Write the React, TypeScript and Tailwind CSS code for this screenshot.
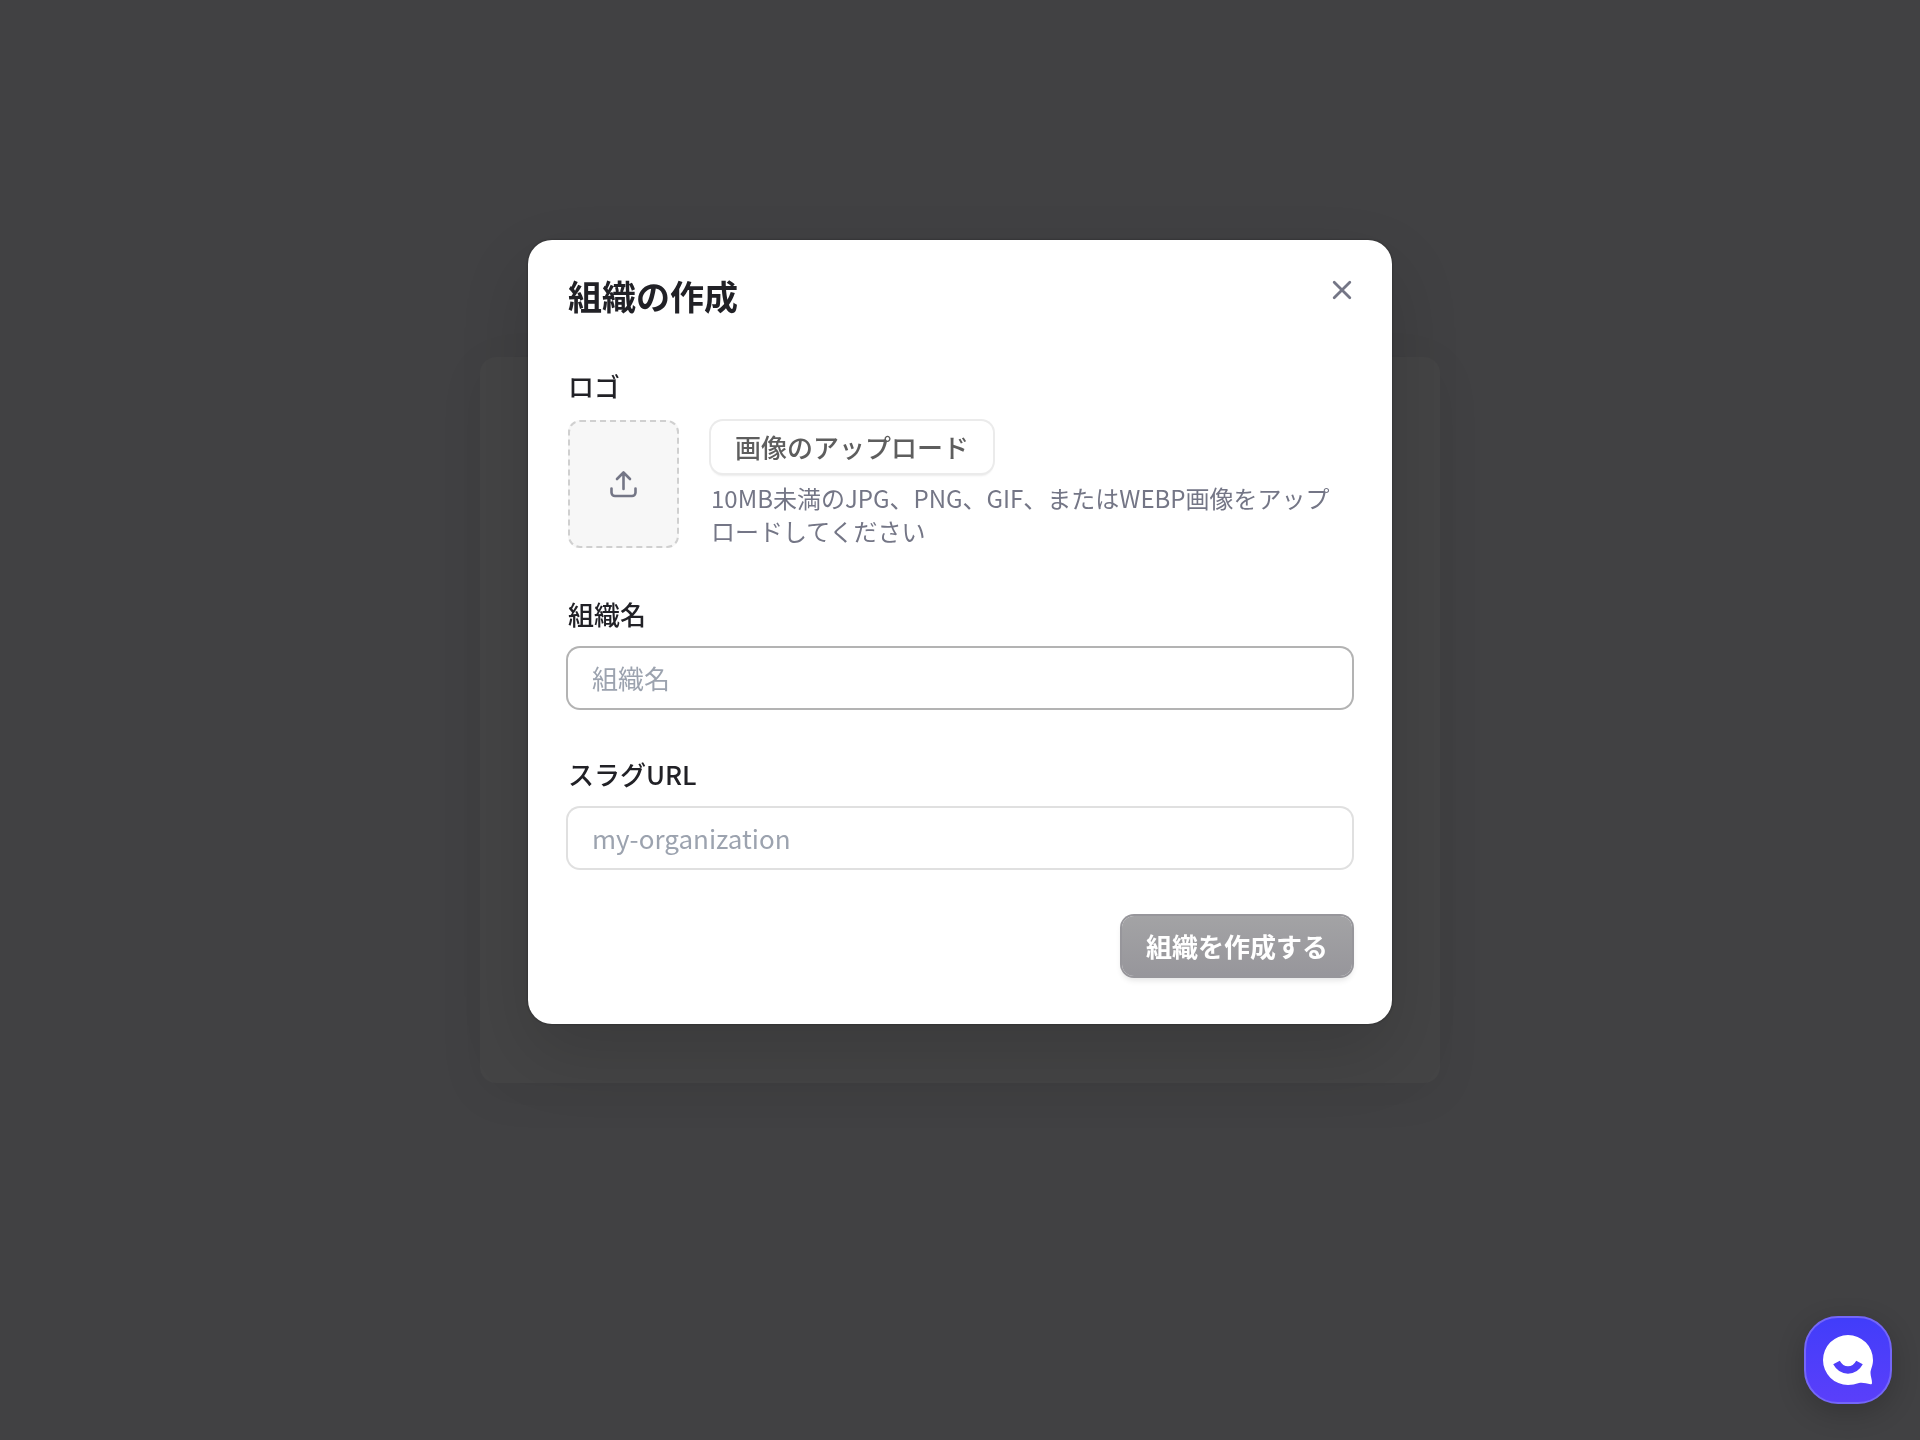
import { type ReactNode } from 'react';

type TextFieldProps = {
  /** The id that ties the label to the input. */
  id: string;
  label: string;
  placeholder: string;
  /** Whether to draw the stronger border of the focused state. */
  isActive?: boolean;
};

/**
 * A labelled single line text input.
 */
function TextField({ id, label, placeholder, isActive }: TextFieldProps) {
  return (
    <div className="flex flex-col gap-4">
      <label htmlFor={id} className="text-[26px] leading-9 font-medium">
        {label}
      </label>
      <input
        id={id}
        type="text"
        placeholder={placeholder}
        className={`h-[60px] w-full rounded-xl bg-white px-6 pb-0.5 text-[26px] outline-none ring-2 placeholder:text-[#9ca3af] ${
          isActive ? 'ring-[#b3b3b3]' : 'ring-[#e0e0e0]'
        }`}
      />
    </div>
  );
}

function UploadIcon() {
  return (
    <svg width="27" height="28" viewBox="0.5 0 27 28" fill="none" stroke="currentColor" strokeWidth="2.6" strokeLinecap="round" strokeLinejoin="round" aria-hidden="true">
      <path d="M14 19V3M7.5 9 14 2.5 20.5 9" />
      <path d="M2 18.5V22.5A3.5 3.5 0 0 0 5.5 26H22.5A3.5 3.5 0 0 0 26 22.5V18.5" />
    </svg>
  );
}

function CloseIcon() {
  return (
    <svg width="20" height="20" viewBox="0 0 20 20" fill="none" stroke="currentColor" strokeWidth="2.8" strokeLinecap="round" aria-hidden="true">
      <path d="M2.2 2.2l15.6 15.6M17.8 2.2L2.2 17.8" />
    </svg>
  );
}

function ChatButton() {
  return (
    <button
      type="button"
      aria-label="チャット"
      className="fixed right-7 bottom-9 flex size-[88px] items-center justify-center rounded-[34px] border-2 border-[#7466f9] bg-linear-to-b from-[#413dfa] to-[#5a3ffa] shadow-[0_8px_28px_rgba(0,0,0,0.2)]"
    >
      <svg width="50" height="50" viewBox="0 0 50 50" aria-hidden="true">
        <path
          fill="#fff"
          d="M25 0A25 25 0 0 1 50 25C50 31 47.5 34 47.5 38C47.5 41.5 49.2 44.5 49 48C49 49 48.4 49.300 47.5 49.2C43.5 48.6 40 47.3 36 48C32 49 29 50 25 50A25 25 0 0 1 25 0Z"
        />
        <path d="M13.5 27.5C19 37.5 31 37.5 36.500 27.5" fill="none" stroke="#4f3efa" strokeWidth="7.5" />
      </svg>
    </button>
  );
}

function LogoField({ children }: { children: ReactNode }) {
  return (
    <div className="flex flex-col gap-4">
      <span className="text-[26px] leading-9 font-medium">ロゴ</span>
      <div className="flex gap-8">
        <button
          type="button"
          aria-label="ロゴを選択"
          className="flex h-32 w-[111px] shrink-0 items-center justify-center rounded-xl border-2 border-dashed border-[#d0d0d0] bg-[#f7f7f7] text-[#747686]"
        >
          <UploadIcon />
        </button>
        <div className="flex flex-col items-start gap-2 pt-px">{children}</div>
      </div>
    </div>
  );
}

export default function App() {
  return (
    <div className="min-h-screen bg-[#414143] font-['Noto_Sans_CJK_JP',sans-serif] text-[#212126]">
      {/* Dimmed page behind the dialog */}
      <div className="fixed inset-0 flex items-center justify-center" aria-hidden="true">
        <div className="h-[726px] w-[960px] rounded-2xl bg-[#444445] shadow-[0_10px_50px_rgba(0,0,0,0.05)]" />
      </div>

      <div className="relative flex justify-center pt-60">
        <form
          role="dialog"
          aria-labelledby="dialog-title"
          className="w-full max-w-[864px] rounded-3xl bg-white px-10 pt-10 pb-12 shadow-[0_30px_70px_rgba(0,0,0,0.14),0_0_3px_rgba(0,0,0,0.4)]"
        >
          <div className="mb-14 flex items-start justify-between">
            <h1 id="dialog-title" className="text-[34px] leading-8 font-bold">
              組織の作成
            </h1>
            <button type="button" aria-label="閉じる" className="text-[#747686]">
              <CloseIcon />
            </button>
          </div>

          <div className="flex flex-col gap-12">
            <LogoField>
              <button
                type="button"
                className="h-[52px] rounded-xl bg-white px-6 pb-0.5 text-[26px] font-medium text-[#5e5e5e] shadow-[0_3px_2px_rgba(0,0,0,0.08)] ring-2 ring-[#ebebeb]"
              >
                画像のアップロード
              </button>
              <p className="text-2xl leading-[33px] text-[#747686]">
                10MB未満のJPG、PNG、GIF、またはWEBP画像をアップロードしてください
              </p>
            </LogoField>
            <TextField id="name" label="組織名" placeholder="組織名" isActive />
            <TextField id="slug" label="スラグURL" placeholder="my-organization" />
            <button
              type="submit"
              className="h-[60px] self-end rounded-xl bg-linear-to-b from-[#a3a3a5] to-[#97969b] px-6 pb-0.5 text-[26px] font-bold text-white shadow-[0_4px_6px_rgba(0,0,0,0.12)] ring-2 ring-[#97969b]"
            >
              組織を作成する
            </button>
          </div>
        </form>
      </div>

      <ChatButton />
    </div>
  );
}
